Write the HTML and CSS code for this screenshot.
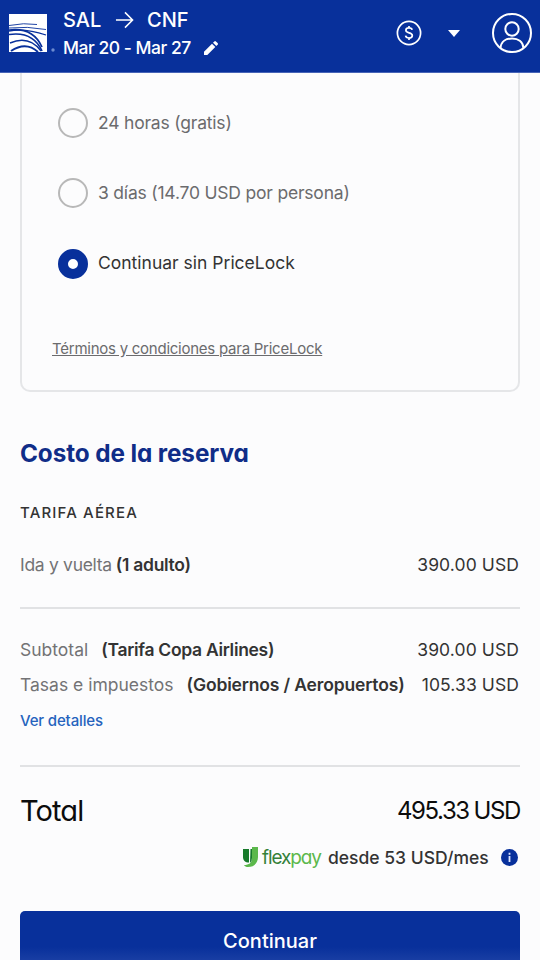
FILE: index.html
```html
<!DOCTYPE html>
<html lang="es">
<head>
<meta charset="utf-8">
<meta name="viewport" content="width=device-width, initial-scale=1">
<title>Copa Airlines</title>
<link rel="stylesheet" href="styles.css">
</head>
<body>
<header class="topbar">
  <svg class="logo" viewBox="0 0 48 40" aria-hidden="true">
    <path fill="#fff" d="M0 0h38v38H0z"/>
    <g fill="none" stroke="#08309b">
      <path stroke-width=".9" d="M0 11.500Q15 8.500 28 10.500M0 14Q18 12 37 15.500"/>
      <path stroke-width="1.300" d="M0 17Q16 14 37 21"/>
      <path stroke-width="1.700" d="M0 16Q24 13 33 33M0 20.500Q24 17 33 37"/>
      <path stroke-width="1.400" d="M1 29Q20 21 32 37"/>
      <path stroke-width="2" d="M2 37Q17 27 29 38"/>
    </g>
    <circle cx="44" cy="36" r="1.7" fill="#6d8bd0"/>
  </svg>
  <div class="trip">
    <div class="route"><span class="origin">SAL</span>
      <svg class="arrow" viewBox="0 0 20 18" aria-hidden="true"><path d="M1 9h17M10.500 1l8 8-8 8"/></svg>
      <span class="dest">CNF</span></div>
    <div class="dates"><span class="range">Mar 20 - Mar 27</span>
      <svg class="pencil" viewBox="0 0 14 14" aria-hidden="true"><path d="M0 14v-3.300L8 2.700 11.300 6 3.300 14zM9 1.700 10.300.4q.8-.8 1.600 0l1.700 1.700q.8.800 0 1.600L12.300 5z"/></svg></div>
  </div>
  <svg class="coin" viewBox="0 0 26 26" aria-hidden="true"><circle cx="13" cy="13" r="11.600"/><path d="M16.200 9.800c-.3-1.200-1.500-1.900-3.200-1.900-1.900 0-3.100.9-3.100 2.300 0 3.600 6.400 1.700 6.400 5.300 0 1.500-1.300 2.500-3.300 2.500-1.900 0-3.200-.8-3.400-2.300M13 6v2M13 18v2"/></svg>
  <svg class="caret" viewBox="0 0 12 7" aria-hidden="true"><path d="M0 0h12L6 7z"/></svg>
  <svg class="avatar" viewBox="0 0 40 40" aria-hidden="true"><circle cx="20" cy="20" r="19"/><circle cx="20" cy="16" r="6.700"/><path d="M8.500 35C9 28.500 14 25.500 20 25.500S31 28.500 31.500 35"/></svg>
</header>
<main>
  <section class="pricelock">
    <label class="option"><span class="radio"></span><span class="text">24 horas (gratis)</span></label>
    <label class="option"><span class="radio"></span><span class="text">3 días (14.70 USD por persona)</span></label>
    <label class="option selected"><span class="radio"></span><span class="text">Continuar sin PriceLock</span></label>
    <a class="terms">Términos y condiciones para PriceLock</a>
  </section>
  <h2 class="title">Costo de la reserva</h2>
  <h3 class="subtitle">TARIFA AÉREA</h3>
  <div class="row fare"><span class="pair"><span class="name">Ida y vuelta</span><b>(1 adulto)</b></span><span class="amount">390.00 USD</span></div>
  <hr>
  <div class="row sub"><span class="pair"><span class="name">Subtotal</span><b>(Tarifa Copa Airlines)</b></span><span class="amount">390.00 USD</span></div>
  <div class="row tax"><span class="pair"><span class="name">Tasas e impuestos</span><b>(Gobiernos / Aeropuertos)</b></span><span class="amount">105.33 USD</span></div>
  <a class="details">Ver detalles</a>
  <hr>
  <div class="row total"><span class="total-label">Total</span><span class="total-amount">495.33 USD</span></div>
  <div class="flex">
    <svg class="flexmark" viewBox="0 0 15 20" aria-hidden="true"><path fill="#177a2b" d="M0 2h6v13.500C2 15.500 0 13.500 0 10z"/><path fill="#5bb84b" d="M9 0h6v10c0 6-4 10-10 10-2 0-3-.6-4-2 5 0 8-2 8-7z"/><path fill="#177a2b" d="M7.500 2H9v9q0 3.500-2 5z"/></svg>
    <span class="flexname">flex<span>pay</span></span>
    <span class="from">desde 53 USD/mes</span>
    <svg class="info" viewBox="0 0 17 17" aria-hidden="true"><circle cx="8.500" cy="8.500" r="8.500" fill="#08309b"/><path d="M7.600 3.800h1.800v1.900H7.600zM7.600 6.900h1.800v6H7.600z" fill="#dce5ff"/></svg>
  </div>
  <button class="continue">Continuar</button>
</main>
</body>
</html>
```
FILE: styles.css
```css
* { box-sizing: border-box; }
html, body { height: 960px; overflow: hidden; }
body { margin: 0; background: #fcfcfd; color: #333; font-family: Inter, "Liberation Sans", sans-serif; font-size: 17.5px; }
svg { display: block; flex: none; }
.topbar { display: flex; height: 73px; background: #08309b; border-bottom: 1px solid #4764b7; color: #fff; padding-left: 9px; }
.logo { width: 48px; height: 40px; margin-top: 14px; }
.trip { width: 340px; padding: 7px 0 0 6px; font-weight: 500; }
.route, .dates { display: flex; align-items: center; white-space: nowrap; }
.route { height: 26px; font-size: 20px; }
.origin { width: 52px; }
.arrow { width: 19px; height: 18px; margin-right: 13px; fill: none; stroke: #fff; stroke-width: 1.6; }
.dates { height: 28px; font-size: 17.5px; letter-spacing: -.48px; }
.range { width: 141px; }
.pencil { width: 14px; height: 14px; fill: #fff; margin-top: 2px; }
.coin { width: 26px; height: 26px; margin: 20px 0 0 -1px; fill: none; stroke: #fff; stroke-width: 1.7; }
.caret { width: 12px; height: 7px; margin: 30px 0 0 26px; fill: #fff; }
.avatar { width: 40px; height: 40px; margin: 13px 0 0 32px; fill: none; stroke: #fff; stroke-width: 2; }
main { padding: 0 20px; }
.pricelock { height: 319px; border: 2px solid #e5e6e8; border-top: 0; border-radius: 0 0 10px 10px; padding: 15px 0 0 36px; }
.option { display: flex; align-items: center; gap: 10px; height: 70.3px; color: #6b6b6d; letter-spacing: -.2px; }
.text { margin-top: -2px; }
.radio { width: 30px; height: 30px; border: 2px solid #b8b8b8; border-radius: 50%; flex: none; }
.selected { color: #333; letter-spacing: 0; }
.selected .radio { border: 10px solid #08309b; background: #fff; }
.terms { display: block; width: max-content; margin: 40px 0 0 -6px; font-size: 15px; line-height: 20px; letter-spacing: -.25px; color: #6b6b6d; text-decoration: underline; }
.title { margin: 44px 0 0; font-size: 24.3px; line-height: 34px; font-weight: 700; letter-spacing: -.1px; color: #102d88; font-feature-settings: "cv11"; }
.subtitle { margin: 32px 0 0; font-size: 15px; line-height: 22px; font-weight: 500; letter-spacing: 1.15px; }
.row { display: flex; justify-content: space-between; align-items: center; white-space: nowrap; height: 36px; }
.fare { margin-top: 22px; }
.name { color: #737375; }
.amount { letter-spacing: .1px; padding-right: 1px; }
b { font-weight: 600; }
hr { height: 2px; border: 0; margin: 25px 0 22px; background: #e1e2e4; }
.pair { display: flex; gap: 13px; }
.fare .pair { gap: 4px; letter-spacing: -.3px; }
.sub b { letter-spacing: -.3px; }
.tax b { letter-spacing: -.15px; }
.tax { height: 35px; }
.details { display: block; line-height: 32px; font-size: 15px; font-weight: 500; letter-spacing: -.15px; color: #2563bd; margin-top: 3px; }
.details + hr { margin: 28px 0 23px; }
.total { height: 40px; color: #0c0c0c; font-feature-settings: "cv11"; }
.total-label { font-size: 29px; letter-spacing: -.9px; }
.total-amount { font-size: 24px; letter-spacing: -1.4px; word-spacing: -.5px; padding-right: 0; }
.flex { display: flex; align-items: center; height: 30px; margin-top: 12px; padding-left: 223px; white-space: nowrap; }
.flexmark { width: 15px; height: 20px; }
.flexname { width: 60px; margin-left: 4px; font-size: 19px; color: #34813a; font-feature-settings: "cv11"; letter-spacing: -1.1px; }
.flexname span { color: #5bb84b; }
.from { margin-left: 6px; font-weight: 500; }
.info { width: 17px; height: 17px; margin-left: auto; margin-right: 2px; }
.continue { display: block; width: 100%; height: 60px; margin-top: 39px; border: 0; border-radius: 5px 5px 0 0; background: linear-gradient(#08309b 60%, #2649aa); color: #fff; font: 500 20px Inter, sans-serif; padding: 0 0 1px; }
```
